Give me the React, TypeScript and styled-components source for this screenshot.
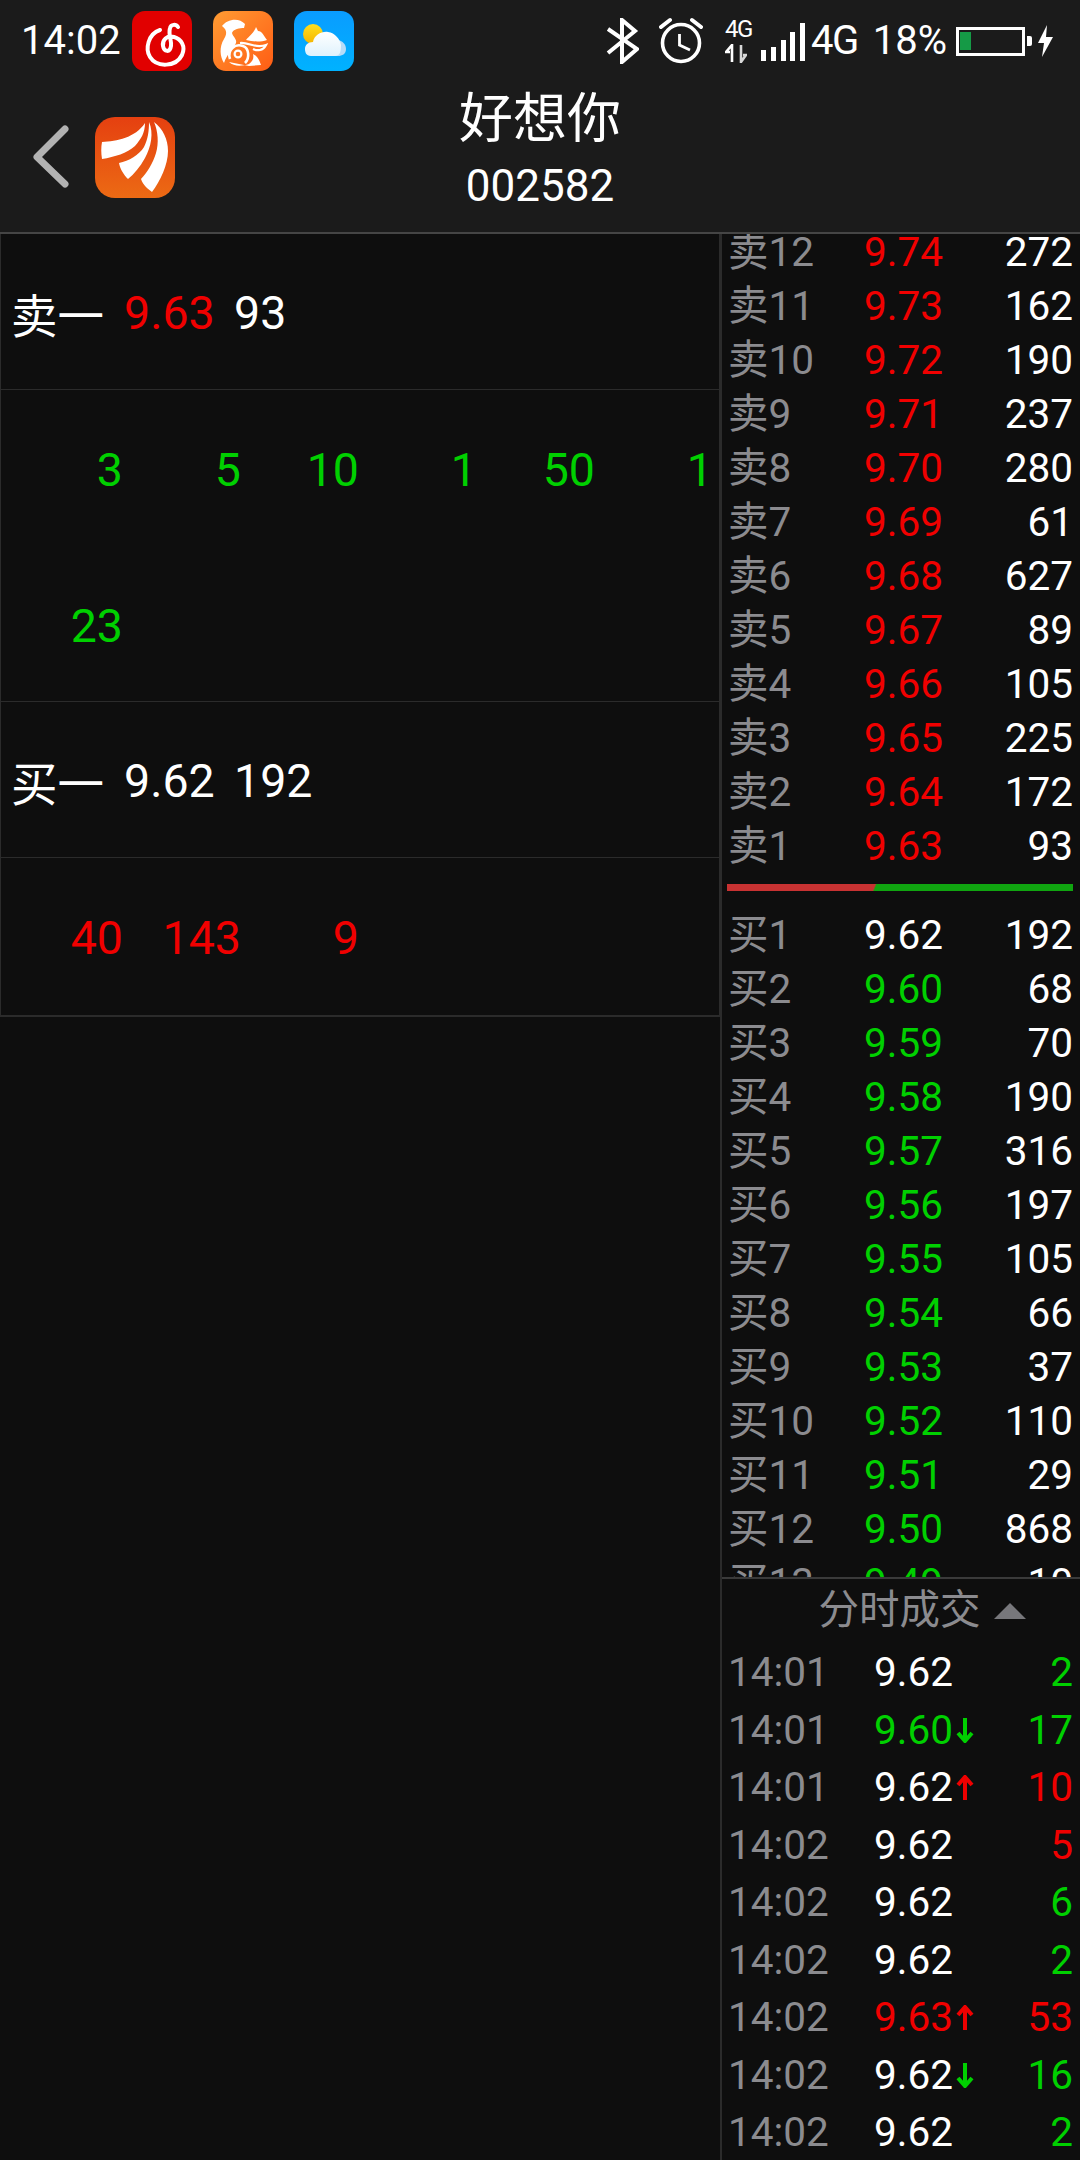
import React from "react";
import styled, { createGlobalStyle } from "styled-components";

const Global = createGlobalStyle`
  html, body { margin: 0; padding: 0; background: #0e0e0e; }
  * { box-sizing: border-box; }
`;

const FONT = `Roboto, "Noto Sans CJK SC", sans-serif`;
const RED = "#f00000";
const GREEN = "#00d000";
const WHITE = "#ffffff";
const GREY = "#8b8b8f";

const Page = styled.div`
  width: 1080px;
  height: 2160px;
  overflow: hidden;
  display: flex;
  flex-direction: column;
  background: #0e0e0e;
  font-family: ${FONT};
  color: ${WHITE};
`;

const TopArea = styled.header`
  height: 234px;
  flex: none;
  background: #1b1b1b;
  border-bottom: 2px solid #454545;
`;

const StatusBar = styled.div`
  height: 82px;
  display: flex;
  align-items: center;
  padding: 0 27px 0 21px;
`;

const Clock = styled.span`
  font-size: 40px;
  line-height: 44px;
  width: 111px;
  flex: none;
`;

const AppIcons = styled.div`
  display: flex;
  gap: 21px;
`;

const AppIcon = styled.svg`
  width: 60px;
  height: 60px;
  display: block;
`;

const StatusRight = styled.div`
  margin-left: auto;
  display: flex;
  align-items: center;
`;

const Bluetooth = styled.svg`
  width: 34px;
  height: 46px;
  display: block;
`;

const Alarm = styled.svg`
  width: 44px;
  height: 48px;
  margin-left: 20px;
  display: block;
`;

const NetBlock = styled.div`
  width: 28px;
  margin-left: 22px;
  display: flex;
  flex-direction: column;
  align-items: flex-start;
`;

const NetLabel = styled.span`
  font-size: 24px;
  line-height: 20px;
  letter-spacing: -1.5px;
`;

const NetArrows = styled.svg`
  width: 22px;
  height: 19px;
  margin-top: 5px;
  display: block;
`;

const Signal = styled.div`
  width: 44px;
  height: 38px;
  margin-left: 8px;
  margin-top: 1px;
  display: flex;
  align-items: flex-end;
  justify-content: space-between;
`;

const SignalBar = styled.i<{ $h: number }>`
  width: 5px;
  height: ${(p) => p.$h}px;
  background: #fff;
  display: block;
`;

const NetType = styled.span`
  font-size: 40px;
  line-height: 44px;
  letter-spacing: -1.5px;
  margin-left: 6px;
`;

const Percent = styled.span`
  font-size: 40px;
  line-height: 44px;
  margin-left: 15px;
`;

const Battery = styled.div`
  width: 69px;
  height: 29px;
  margin-left: 9px;
  border: 3px solid #fff;
  padding: 2px 0 3px 1px;
`;

const BatteryFill = styled.div`
  width: 11px;
  height: 100%;
  background: #159a46;
`;

const BatteryNub = styled.div`
  width: 5px;
  height: 10px;
  margin-left: 2px;
  background: #fff;
  border-radius: 0 2px 2px 0;
`;

const Bolt = styled.svg`
  width: 15px;
  height: 32px;
  margin-left: 6px;
  display: block;
`;

const NavBar = styled.div`
  height: 150px;
  display: grid;
  grid-template-columns: 1fr auto 1fr;
  align-items: center;
`;

const NavLeft = styled.div`
  display: flex;
  align-items: center;
  gap: 23px;
  padding-left: 30px;
`;

const Back = styled.svg`
  width: 42px;
  height: 68px;
  display: block;
`;

const Logo = styled.svg`
  width: 80px;
  height: 81px;
  display: block;
`;

const TitleBlock = styled.div`
  display: flex;
  flex-direction: column;
  align-items: center;
  margin-top: -9px;
`;

const Title = styled.div`
  font-size: 54px;
  line-height: 66px;
`;

const Code = styled.div`
  font-size: 44px;
  line-height: 66px;
`;

const Main = styled.main`
  flex: 1;
  min-height: 0;
  display: flex;
`;

const LeftPanel = styled.section`
  width: 720px;
  flex: none;
`;

const Table = styled.div`
  border: 1px solid #2b2b2b;
  border-top: none;
  font-size: 46.5px;
`;

const Cell = styled.div<{ $h: number }>`
  height: ${(p) => p.$h}px;
  border-bottom: 1px solid #2b2b2b;
  display: flex;
  align-items: center;
  padding: 2px 0 0 10px;
`;

const QuoteLabel = styled.span`
  width: 113px;
  flex: none;
`;

const QuotePrice = styled.span<{ $c: string }>`
  width: 110px;
  flex: none;
  color: ${(p) => p.$c};
`;

const TicksCell = styled.div<{ $h: number }>`
  height: ${(p) => p.$h}px;
  border-bottom: 1px solid #2b2b2b;
  display: grid;
  grid-template-columns: repeat(6, 118px);
  grid-auto-rows: 156px;
  align-items: center;
  padding: 2px 0 0 4px;
  overflow: hidden;
`;

const Tick = styled.span<{ $c: string }>`
  text-align: right;
  color: ${(p) => p.$c};
`;

const RightPanel = styled.aside`
  flex: 1;
  min-width: 0;
  display: flex;
  flex-direction: column;
  border-left: 2px solid #2b2b2b;
  font-size: 40.5px;
`;

const Depth = styled.div`
  flex: none;
  height: 1343px;
  overflow: hidden;
`;

const DepthScroll = styled.div`
  margin-top: -9px;
`;

const DepthRow = styled.div`
  height: 54px;
  padding: 0 7px 0 6px;
  display: grid;
  grid-template-columns: 136px 1fr auto;
  align-items: center;
  line-height: 54px;
`;

const Label = styled.span`
  color: ${GREY};
  white-space: nowrap;
`;

const Value = styled.span<{ $c: string }>`
  color: ${(p) => p.$c};
`;

const Ratio = styled.div`
  height: 7px;
  margin: 11px 7px 17px 5px;
  background: linear-gradient(
    112deg,
    #c83232 0,
    #c83232 42.5%,
    #10a510 43%,
    #10a510 100%
  );
`;

const Trades = styled.div`
  flex: 1;
  min-height: 0;
  overflow: hidden;
  border-top: 2px solid #3a3a3a;
`;

const TradesHead = styled.div`
  height: 65px;
  display: flex;
  align-items: center;
  justify-content: center;
  color: ${GREY};
  padding: 0 3px 3px 0;
`;

const TradesTitle = styled.span`
  position: relative;
  line-height: 56px;
`;

const Caret = styled.i`
  position: absolute;
  left: calc(100% + 13px);
  top: 21px;
  width: 0;
  height: 0;
  border-left: 16px solid transparent;
  border-right: 16px solid transparent;
  border-bottom: 16px solid #77777b;
`;

const TradeRow = styled.div`
  height: 57.5px;
  padding: 0 7px 0 6px;
  display: grid;
  grid-template-columns: 146px 1fr auto;
  align-items: center;
  line-height: 57.5px;
`;

const PriceWrap = styled.span`
  display: flex;
  align-items: center;
`;

const TradePrice = styled.span<{ $c: string }>`
  width: 82px;
  color: ${(p) => p.$c};
`;

const Arrow = styled.svg`
  width: 18px;
  height: 26px;
  display: block;
`;

const sells: [string, string, string][] = [
  ["卖12", "9.74", "272"],
  ["卖11", "9.73", "162"],
  ["卖10", "9.72", "190"],
  ["卖9", "9.71", "237"],
  ["卖8", "9.70", "280"],
  ["卖7", "9.69", "61"],
  ["卖6", "9.68", "627"],
  ["卖5", "9.67", "89"],
  ["卖4", "9.66", "105"],
  ["卖3", "9.65", "225"],
  ["卖2", "9.64", "172"],
  ["卖1", "9.63", "93"],
];

const buys: [string, string, string][] = [
  ["买1", "9.62", "192"],
  ["买2", "9.60", "68"],
  ["买3", "9.59", "70"],
  ["买4", "9.58", "190"],
  ["买5", "9.57", "316"],
  ["买6", "9.56", "197"],
  ["买7", "9.55", "105"],
  ["买8", "9.54", "66"],
  ["买9", "9.53", "37"],
  ["买10", "9.52", "110"],
  ["买11", "9.51", "29"],
  ["买12", "9.50", "868"],
  ["买13", "9.49", "10"],
];

type Trade = { t: string; p: string; c: string; dir?: "up" | "down"; q: string; qc: string };
const trades: Trade[] = [
  { t: "14:01", p: "9.62", c: WHITE, q: "2", qc: GREEN },
  { t: "14:01", p: "9.60", c: GREEN, dir: "down", q: "17", qc: GREEN },
  { t: "14:01", p: "9.62", c: WHITE, dir: "up", q: "10", qc: RED },
  { t: "14:02", p: "9.62", c: WHITE, q: "5", qc: RED },
  { t: "14:02", p: "9.62", c: WHITE, q: "6", qc: GREEN },
  { t: "14:02", p: "9.62", c: WHITE, q: "2", qc: GREEN },
  { t: "14:02", p: "9.63", c: RED, dir: "up", q: "53", qc: RED },
  { t: "14:02", p: "9.62", c: WHITE, dir: "down", q: "16", qc: GREEN },
  { t: "14:02", p: "9.62", c: WHITE, q: "2", qc: GREEN },
];

const NetEaseIcon = () => (
  <AppIcon viewBox="0 0 60 60">
    <rect width="60" height="60" rx="13" fill="#e10000" />
    <path
      d="M28 19 C16 23 13 38 18 46 C25 57 44 56 50 44 C54 35 49 28 42 26 C35 24 30 29 31 35 C32 41 38 42 39 35 C40 30 36 24 38 17 C39 13 44 13 46 16"
      fill="none"
      stroke="#fff"
      strokeWidth="4"
      strokeLinecap="round"
    />
  </AppIcon>
);

const UcIcon = () => (
  <AppIcon viewBox="0 0 60 60">
    <defs>
      <linearGradient id="uc" x1="0" y1="0" x2="1" y2="1">
        <stop offset="0" stopColor="#ff9c33" />
        <stop offset="1" stopColor="#ff5c14" />
      </linearGradient>
    </defs>
    <rect width="60" height="60" rx="13" fill="url(#uc)" />
    <path
      d="M9 15 C14 8 26 6 32 13 L31 17 C27 17 20 18 19 22 C20 26 24 28 23 32 C20 38 14 43 11 52 C7 46 6 36 11 28 C15 22 13 18 9 15 Z"
      fill="#fff"
    />
    <path d="M33 29 C36 25 41 22 43 16 L45 20 C49 20 51 25 54 29 C48 31 41 31 33 29 Z" fill="#fff" />
    <circle cx="25" cy="43" r="3.4" fill="none" stroke="#fff" strokeWidth="2.2" />
    <path d="M17 48 C14 39 22 32 30 35 C36 37 37 47 32 52" fill="none" stroke="#fff" strokeWidth="2.6" />
    <path d="M27 32 C36 31 42 38 53 34 C50 40 44 40 40 38" fill="none" stroke="#fff" strokeWidth="2.2" />
    <path d="M16 51 C21 56 30 55 36 53 C40 50 41 47 40 43 C44 45 46 48 48 54 L36 55 Z" fill="#fff" />
  </AppIcon>
);

const WeatherIcon = () => (
  <AppIcon viewBox="0 0 60 60">
    <defs>
      <linearGradient id="sky" x1="0" y1="0" x2="0" y2="1">
        <stop offset="0" stopColor="#0a9cff" />
        <stop offset="1" stopColor="#00b2ff" />
      </linearGradient>
      <linearGradient id="sun" x1="0" y1="0" x2="0" y2="1">
        <stop offset="0" stopColor="#ffdf1f" />
        <stop offset="1" stopColor="#f4b400" />
      </linearGradient>
      <linearGradient id="cloud" x1="0" y1="0" x2="0" y2="1">
        <stop offset="0" stopColor="#ffffff" />
        <stop offset="1" stopColor="#dff2fd" />
      </linearGradient>
    </defs>
    <rect width="60" height="60" rx="13" fill="url(#sky)" />
    <circle cx="19" cy="23" r="10" fill="url(#sun)" />
    <path d="M34 30 C42 26 52 30 52 38 C52 43 48 45 44 45 L34 45 Z" fill="#b7dcf8" />
    <path
      d="M17 45 C12 45 11 41 11 38 C11 34 14 31 19 31 C20 24 28 20 34 21 C41 22 46 28 47 34 C47 41 46 45 41 45 Z"
      fill="url(#cloud)"
    />
  </AppIcon>
);

const OrangeLogo = () => (
  <Logo viewBox="0 0 80 81">
    <defs>
      <linearGradient id="logo" x1="0" y1="0" x2="0" y2="1">
        <stop offset="0" stopColor="#e54010" />
        <stop offset="1" stopColor="#ec6a14" />
      </linearGradient>
    </defs>
    <rect width="80" height="81" rx="20" fill="url(#logo)" />
    <path d="M50 6 C50 16 46 22 40 29 C32 36 20 40 7 42 C6 36 6 30 7 25 C22 24 40 21 50 6 Z" fill="#fff" />
    <path d="M54 5 C59 16 56 30 50 41 C45 50 39 57 33 62 C29 58 25 52 24 46 C34 44 44 38 49 30 C53 22 54 14 54 5 Z" fill="#fff" />
    <path d="M59 5 C68 12 73 22 73 34 C73 48 65 64 57 75 C53 72 48 68 46 62 C52 56 58 46 61 36 C64 26 63 14 59 5 Z" fill="#fff" />
  </Logo>
);

const TradeArrow = ({ dir, color }: { dir: "up" | "down"; color: string }) => (
  <Arrow viewBox="0 0 18 26">
    {dir === "up" ? (
      <path d="M9 25 V2 M2 10 L9 2 L16 10" fill="none" stroke={color} strokeWidth="4" />
    ) : (
      <path d="M9 1 V24 M2 16 L9 24 L16 16" fill="none" stroke={color} strokeWidth="4" />
    )}
  </Arrow>
);

const Ticks = ({ values, color, h }: { values: string[]; color: string; h: number }) => (
  <TicksCell $h={h}>
    {values.map((v, i) => (
      <Tick key={i} $c={color}>
        {v}
      </Tick>
    ))}
  </TicksCell>
);

export default function App() {
  return (
    <Page>
      <Global />
      <TopArea>
        <StatusBar>
          <Clock>14:02</Clock>
          <AppIcons>
            <NetEaseIcon />
            <UcIcon />
            <WeatherIcon />
          </AppIcons>
          <StatusRight>
            <Bluetooth viewBox="0 0 34 46">
              <path
                d="M3 35 L30 13 L17 2 V44 L32 31 L3 11"
                fill="none"
                stroke="#fff"
                strokeWidth="4"
              />
            </Bluetooth>
            <Alarm viewBox="0 0 44 48">
              <circle cx="22" cy="26" r="18.5" fill="none" stroke="#fff" strokeWidth="3.6" />
              <path
                d="M2 10 L11 3 M33 3 L42 10"
                fill="none"
                stroke="#fff"
                strokeWidth="4"
                strokeLinecap="round"
              />
              <path d="M20.5 17 V28 L31 33" fill="none" stroke="#fff" strokeWidth="2.8" />
            </Alarm>
            <NetBlock>
              <NetLabel>4G</NetLabel>
              <NetArrows viewBox="0 0 22 19">
                <path d="M7 18 V1 L1 8 H5" fill="none" stroke="#fff" strokeWidth="2.6" />
                <path d="M16 1 V18 L21 11 H18" fill="none" stroke="#d8d8d8" strokeWidth="2.6" />
              </NetArrows>
            </NetBlock>
            <Signal>
              {[11, 14, 21, 29, 38].map((h) => (
                <SignalBar key={h} $h={h} />
              ))}
            </Signal>
            <NetType>4G</NetType>
            <Percent>18%</Percent>
            <Battery>
              <BatteryFill />
            </Battery>
            <BatteryNub />
            <Bolt viewBox="0 0 15 32">
              <path d="M9 0 L0 18 H6 L4 32 L15 12 H8 Z" fill="#fff" />
            </Bolt>
          </StatusRight>
        </StatusBar>
        <NavBar>
          <NavLeft>
            <Back viewBox="0 0 42 68">
              <path
                d="M35 6 L7 34 L35 61"
                fill="none"
                stroke="#b2b2b2"
                strokeWidth="7"
                strokeLinecap="round"
                strokeLinejoin="round"
              />
            </Back>
            <OrangeLogo />
          </NavLeft>
          <TitleBlock>
            <Title>好想你</Title>
            <Code>002582</Code>
          </TitleBlock>
        </NavBar>
      </TopArea>
      <Main>
        <LeftPanel>
          <Table>
            <Cell $h={156}>
              <QuoteLabel>卖一</QuoteLabel>
              <QuotePrice $c={RED}>9.63</QuotePrice>
              <Value $c={WHITE}>93</Value>
            </Cell>
            <Ticks h={312} color={GREEN} values={["3", "5", "10", "1", "50", "1", "23"]} />
            <Cell $h={156}>
              <QuoteLabel>买一</QuoteLabel>
              <QuotePrice $c={WHITE}>9.62</QuotePrice>
              <Value $c={WHITE}>192</Value>
            </Cell>
            <Ticks h={158} color={RED} values={["40", "143", "9"]} />
          </Table>
        </LeftPanel>
        <RightPanel>
          <Depth>
            <DepthScroll>
              {sells.map(([l, p, q]) => (
                <DepthRow key={l}>
                  <Label>{l}</Label>
                  <Value $c={RED}>{p}</Value>
                  <Value $c={WHITE}>{q}</Value>
                </DepthRow>
              ))}
              <Ratio />
              {buys.map(([l, p, q], i) => (
                <DepthRow key={l}>
                  <Label>{l}</Label>
                  <Value $c={i === 0 ? WHITE : GREEN}>{p}</Value>
                  <Value $c={WHITE}>{q}</Value>
                </DepthRow>
              ))}
            </DepthScroll>
          </Depth>
          <Trades>
            <TradesHead>
              <TradesTitle>
                分时成交
                <Caret />
              </TradesTitle>
            </TradesHead>
            {trades.map((r, i) => (
              <TradeRow key={i}>
                <Label>{r.t}</Label>
                <PriceWrap>
                  <TradePrice $c={r.c}>{r.p}</TradePrice>
                  {r.dir && <TradeArrow dir={r.dir} color={r.dir === "up" ? RED : GREEN} />}
                </PriceWrap>
                <Value $c={r.qc}>{r.q}</Value>
              </TradeRow>
            ))}
          </Trades>
        </RightPanel>
      </Main>
    </Page>
  );
}
